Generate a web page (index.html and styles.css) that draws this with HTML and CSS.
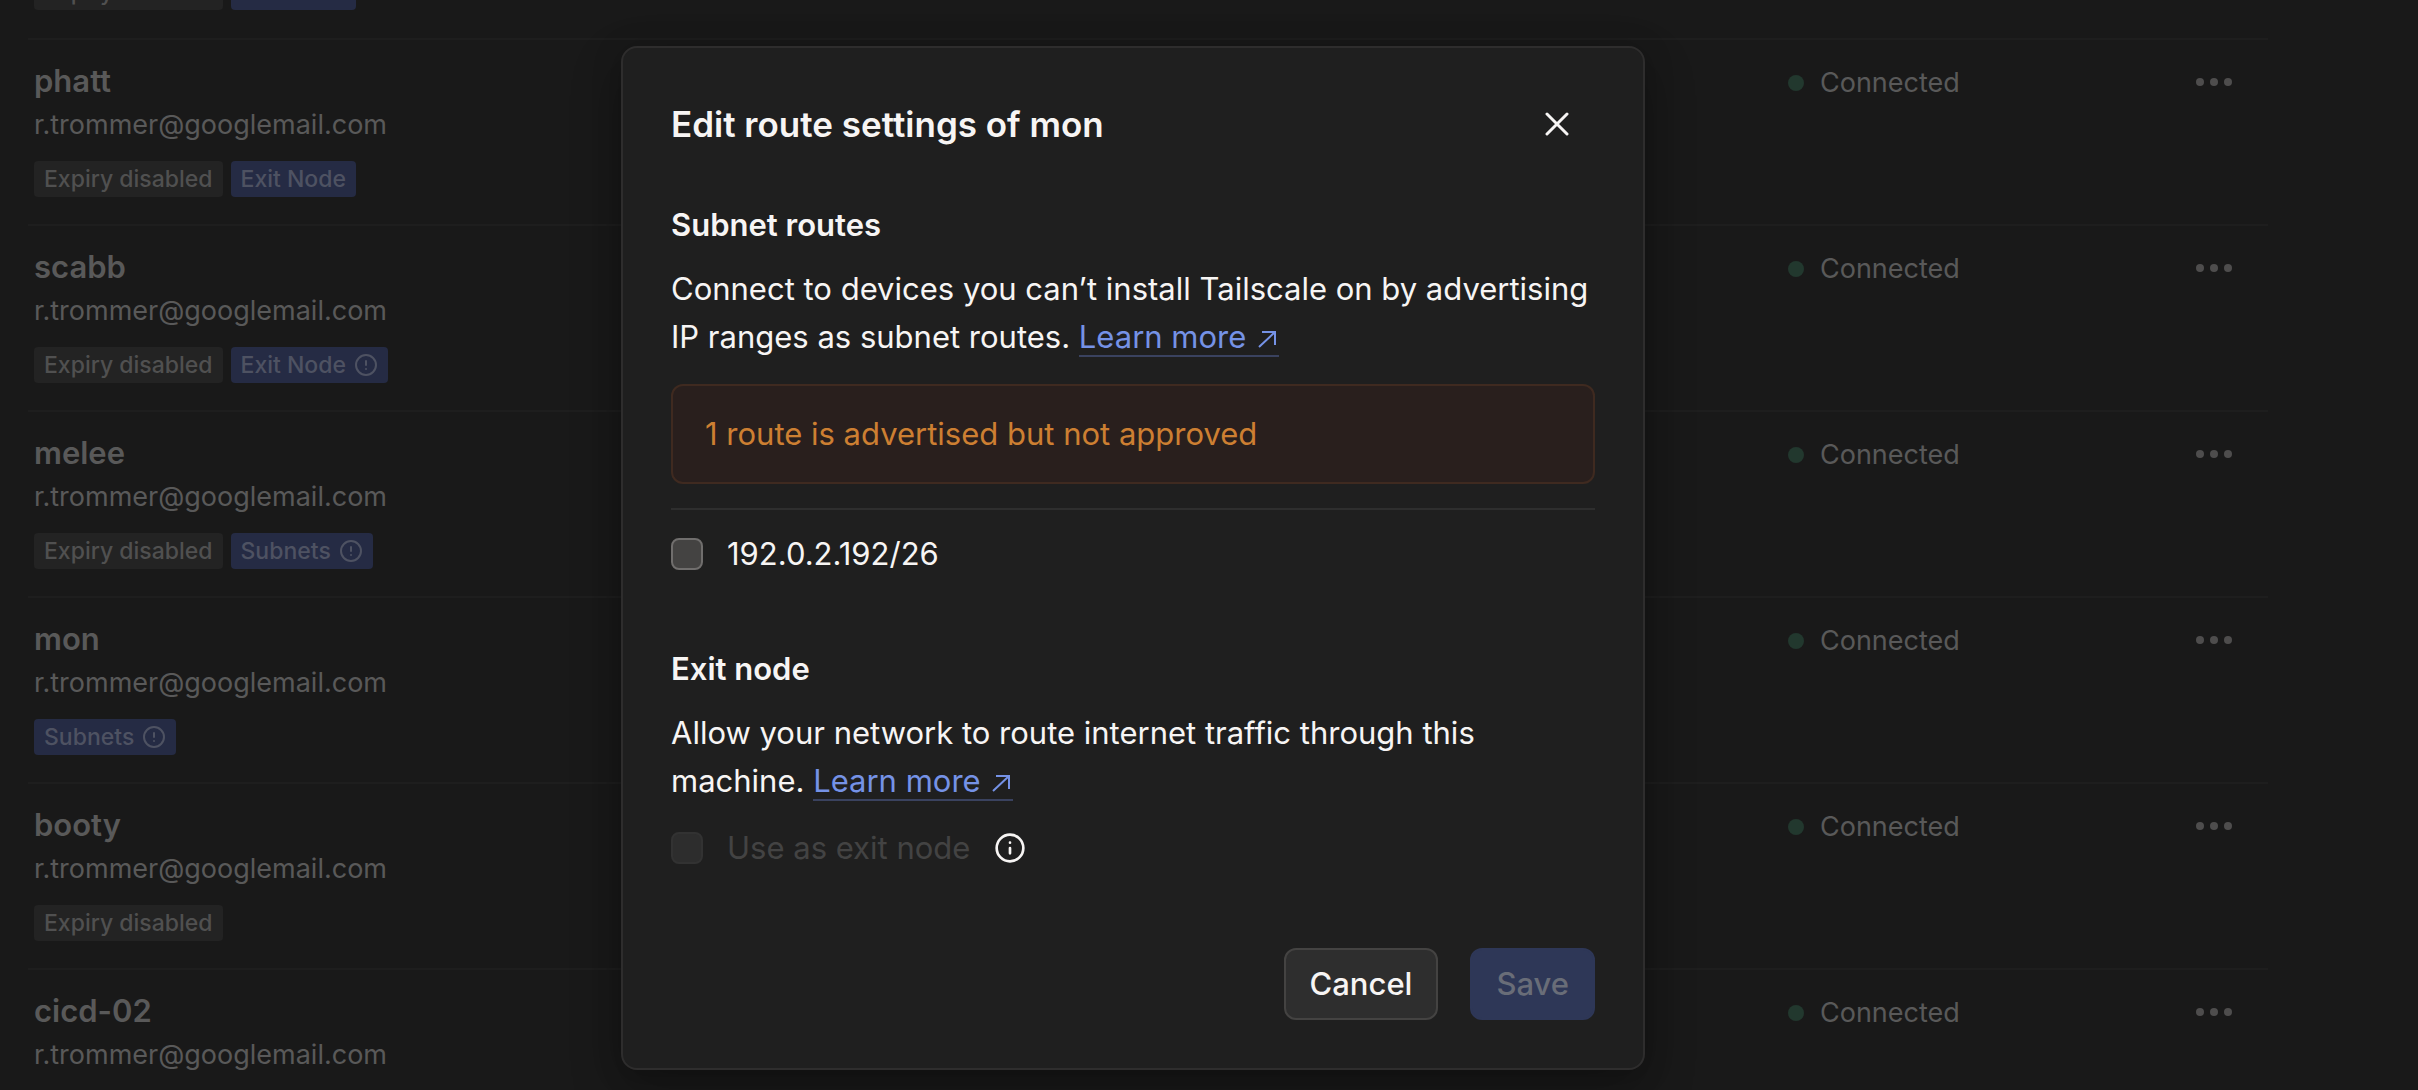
FILE: index.html
```html
<!DOCTYPE html>
<html lang="en">
<head>
<meta charset="utf-8">
<title>Machines</title>
<link rel="stylesheet" href="styles.css">
</head>
<body>
<svg class="sprite" aria-hidden="true">
  <symbol id="alert" viewBox="0 0 24 24" fill="none" stroke="currentColor" stroke-width="2" stroke-linecap="round"><circle cx="12" cy="12" r="10"/><path d="M12 8v4M12 16h.01"/></symbol>
  <symbol id="info" viewBox="0 0 24 24" fill="none" stroke="currentColor" stroke-width="2" stroke-linecap="round"><circle cx="12" cy="12" r="10"/><path d="M12 16v-4M12 8h.01"/></symbol>
  <symbol id="out" viewBox="0 0 24 20" fill="none" stroke="currentColor" stroke-width="2"><path d="M4 19L20 4M7 4H20V17"/></symbol>
  <symbol id="close" viewBox="0 0 24 24" fill="none" stroke="currentColor" stroke-width="3" stroke-linecap="round"><path d="M2 2L22 22M22 2L2 22"/></symbol>
  <symbol id="dots" viewBox="0 0 36 10" fill="currentColor"><circle cx="4" cy="5" r="4"/><circle cx="18" cy="5" r="4"/><circle cx="32" cy="5" r="4"/></symbol>
</svg>

<main class="page">
  <table class="machines">
    <tbody>
      <tr>
        <td class="machine"><div class="name">monkey</div><div class="owner">r.trommer@googlemail.com</div><div class="tags"><span class="tag">Expiry disabled</span><span class="tag tag-blue">Exit Node</span></div></td>
        <td class="status"><span class="state"><i class="dot"></i>Connected</span></td>
        <td class="actions"><button class="more" type="button" aria-label="Actions"><svg><use href="#dots"/></svg></button></td>
      </tr>
      <tr>
        <td class="machine"><div class="name">phatt</div><div class="owner">r.trommer@googlemail.com</div><div class="tags"><span class="tag">Expiry disabled</span><span class="tag tag-blue">Exit Node</span></div></td>
        <td class="status"><span class="state"><i class="dot"></i>Connected</span></td>
        <td class="actions"><button class="more" type="button" aria-label="Actions"><svg><use href="#dots"/></svg></button></td>
      </tr>
      <tr>
        <td class="machine"><div class="name">scabb</div><div class="owner">r.trommer@googlemail.com</div><div class="tags"><span class="tag">Expiry disabled</span><span class="tag tag-blue">Exit Node<svg><use href="#alert"/></svg></span></div></td>
        <td class="status"><span class="state"><i class="dot"></i>Connected</span></td>
        <td class="actions"><button class="more" type="button" aria-label="Actions"><svg><use href="#dots"/></svg></button></td>
      </tr>
      <tr>
        <td class="machine"><div class="name">melee</div><div class="owner">r.trommer@googlemail.com</div><div class="tags"><span class="tag">Expiry disabled</span><span class="tag tag-blue">Subnets<svg><use href="#alert"/></svg></span></div></td>
        <td class="status"><span class="state"><i class="dot"></i>Connected</span></td>
        <td class="actions"><button class="more" type="button" aria-label="Actions"><svg><use href="#dots"/></svg></button></td>
      </tr>
      <tr>
        <td class="machine"><div class="name">mon</div><div class="owner">r.trommer@googlemail.com</div><div class="tags"><span class="tag tag-blue">Subnets<svg><use href="#alert"/></svg></span></div></td>
        <td class="status"><span class="state"><i class="dot"></i>Connected</span></td>
        <td class="actions"><button class="more" type="button" aria-label="Actions"><svg><use href="#dots"/></svg></button></td>
      </tr>
      <tr>
        <td class="machine"><div class="name">booty</div><div class="owner">r.trommer@googlemail.com</div><div class="tags"><span class="tag">Expiry disabled</span></div></td>
        <td class="status"><span class="state"><i class="dot"></i>Connected</span></td>
        <td class="actions"><button class="more" type="button" aria-label="Actions"><svg><use href="#dots"/></svg></button></td>
      </tr>
      <tr>
        <td class="machine"><div class="name">cicd-02</div><div class="owner">r.trommer@googlemail.com</div><div class="tags"><span class="tag">Expiry disabled</span></div></td>
        <td class="status"><span class="state"><i class="dot"></i>Connected</span></td>
        <td class="actions"><button class="more" type="button" aria-label="Actions"><svg><use href="#dots"/></svg></button></td>
      </tr>
    </tbody>
  </table>
</main>

<div class="overlay">
  <section class="dialog" role="dialog" aria-modal="true" aria-labelledby="dialog-title">
    <header class="dialog-head">
      <h1 class="title" id="dialog-title">Edit route settings of mon</h1>
      <button class="close" type="button" aria-label="Close"><svg><use href="#close"/></svg></button>
    </header>

    <h2 class="heading">Subnet routes</h2>
    <p class="text">Connect to devices you can’t install Tailscale on by advertising IP ranges as subnet routes. <a class="link" href="#subnets">Learn more <svg><use href="#out"/></svg></a></p>
    <div class="notice">1 route is advertised but not approved</div>
    <div class="routes">
      <label class="option"><input class="box" type="checkbox">192.0.2.192/26</label>
    </div>

    <h2 class="heading">Exit node</h2>
    <p class="text">Allow your network to route internet traffic through this machine. <a class="link" href="#exit-node">Learn more <svg><use href="#out"/></svg></a></p>
    <div class="exit">
      <label class="option option-off"><input class="box" type="checkbox" disabled>Use as exit node</label>
      <svg class="info"><use href="#info"/></svg>
    </div>

    <footer class="buttons">
      <button class="button" type="button">Cancel</button>
      <button class="button button-save" type="submit" disabled>Save</button>
    </footer>
  </section>
</div>
</body>
</html>
```
FILE: styles.css
```css
* { box-sizing: border-box; }

body {
  margin: 0;
  height: 100vh;
  overflow: hidden;
  background: #191919;
  color: #f7f5f4;
  font-family: Inter, "Liberation Sans", sans-serif;
  font-size: 31px;
  line-height: 48px;
}

button { font: inherit; color: inherit; }

.sprite { display: none; }

.page {
  height: 100vh;
  overflow: hidden;
  padding: 0 150px 0 28px;
  display: flex;
  flex-direction: column;
}

/* The list is scrolled: its first row is partly above the window. */
.machines {
  width: 100%;
  margin-top: -147px;
  table-layout: fixed;
  border-collapse: collapse;
  color: #595959;
  font-size: 27px;
}

.machines td {
  height: 186px;
  padding: 19px 6px 0;
  border-bottom: 2px solid #1e1e1e;
  vertical-align: top;
}

.machines .status { width: 414px; padding-top: 23px; }
.machines .actions { width: 72px; padding: 37px 0 0; }

.name { font-size: 31px; font-weight: 600; line-height: 44px; }
.owner { line-height: 44px; }

.tags { display: flex; gap: 8px; margin-top: 14px; }

.tag {
  display: flex;
  align-items: center;
  gap: 8px;
  height: 36px;
  padding: 0 10px;
  border-radius: 4px;
  background: #232323;
  color: #505050;
  font-size: 23px;
  font-weight: 500;
}

.tag-blue { background: #252b44; color: #4e5262; }
.tag svg { width: 24px; height: 24px; }

.state { display: flex; align-items: center; gap: 16px; line-height: 40px; }
.dot { width: 16px; height: 16px; border-radius: 50%; background: #22382e; }

.more { display: block; padding: 0; border: 0; background: none; }
.more svg { display: block; width: 36px; height: 10px; color: #4e4d4d; }

.overlay {
  position: absolute;
  inset: 0;
  padding: 46px 152px 20px 0;
  display: flex;
  justify-content: center;
  align-items: flex-start;
}

.dialog {
  width: 1024px;
  max-width: 100%;
  padding: 48px;
  border: 2px solid #2e2d2d;
  border-radius: 16px;
  background: #1f1f1f;
  box-shadow: 0 20px 50px rgba(0, 0, 0, 0.25), 0 4px 30px rgba(0, 0, 0, 0.2);
}

.dialog-head {
  display: flex;
  justify-content: space-between;
  align-items: center;
  margin-bottom: 49px;
  padding-right: 26px;
}

.title { margin: 0; font-size: 35px; font-weight: 600; line-height: 56px; }

.close { padding: 0; border: 0; background: none; }
.close svg { display: block; width: 24px; height: 24px; }

.heading { margin: 0 0 16px; font-size: 31px; font-weight: 600; line-height: 48px; }
.text { margin: 0; }

.link { color: #7592e6; text-decoration: none; border-bottom: 2px solid #3a425f; }
.link svg { width: 24px; height: 20px; }

.notice {
  margin-top: 23px;
  padding: 24px 32px;
  border: 2px solid #3f2a20;
  border-radius: 12px;
  background: #291f1d;
  color: #cd7f32;
}

.routes { margin: 24px 0 67px; padding-top: 20px; border-top: 2px solid #2e2e2e; }

.option { display: flex; align-items: center; gap: 24px; }
.option-off { color: #434343; }

.box {
  appearance: none;
  width: 32px;
  height: 32px;
  margin: 0;
  border: 2px solid #706e6d;
  border-radius: 8px;
  background: #444342;
}

.box:disabled { border-color: #323232; background: #2d2d2d; }

.exit { display: flex; align-items: center; gap: 24px; margin-top: 19px; }
.info { width: 32px; height: 32px; }

.buttons { display: flex; justify-content: flex-end; gap: 32px; margin-top: 76px; }

.button {
  height: 72px;
  padding: 0 24px;
  border: 2px solid #444342;
  border-radius: 12px;
  background: #2e2e2e;
  font-weight: 500;
}

.button-save { border-color: #2e3757; background: #2e3757; color: #696d78; }
```
